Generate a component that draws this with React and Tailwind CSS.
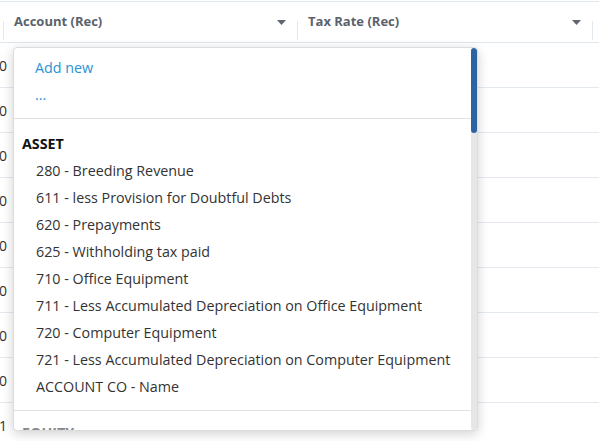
import React from 'react'

const items = [
  '280 - Breeding Revenue',
  '611 - less Provision for Doubtful Debts',
  '620 - Prepayments',
  '625 - Withholding tax paid',
  '710 - Office Equipment',
  '711 - Less Accumulated Depreciation on Office Equipment',
  '720 - Computer Equipment',
  '721 - Less Accumulated Depreciation on Computer Equipment',
  'ACCOUNT CO - Name',
]

const rows = ['0.00', '0.00', '0.00', '0.00', '0.00', '0.00', '0.00', '0.00', '0.01']

function Caret() {
  return (
    <svg width="9" height="5" viewBox="0 0 9 5" className="shrink-0">
      <path d="M0 0h9L4.5 5z" fill="#5f6670" />
    </svg>
  )
}

export default function App() {
  return (
    <div className="relative h-[441px] w-[599px] overflow-hidden bg-white" style={{ fontFamily: '"Open Sans", "Liberation Sans", sans-serif' }}>
      <div className="mt-px border-t border-[#dfe7ee]">
        <div className="flex h-[41px] items-stretch border-b border-[#dfe7ee] text-[13px] font-bold text-[#5b626c]">
          <div className="flex w-[4px] items-end pb-[2px]">
            <div className="ml-[3px] h-[19px] w-px bg-[#e3e8ed]" />
          </div>
          <div className="flex w-[293px] items-center pl-[10px] pr-[11px]">
            <span className="flex-1">Account (Rec)</span>
            <Caret />
          </div>
          <div className="flex items-end pb-[2px]">
            <div className="h-[19px] w-px bg-[#e3e8ed]" />
          </div>
          <div className="flex w-[294px] items-center pl-[10px] pr-[11px]">
            <span className="flex-1">Tax Rate (Rec)</span>
            <Caret />
          </div>
          <div className="flex items-end pb-[2px]">
            <div className="h-[19px] w-px bg-[#e3e8ed]" />
          </div>
        </div>
        {rows.map((v, i) => (
          <div key={i} className="flex h-[45px] items-center border-b border-[#e3e9ef] text-[14px] text-[#333]">
            <div className="flex w-[7px] justify-end overflow-hidden whitespace-nowrap">{v}</div>
          </div>
        ))}
      </div>

      <div className="absolute left-[13px] top-[47px] flex h-[384px] w-[465px] overflow-hidden rounded-[4px] border border-[#dcdcdc] bg-white shadow-[0_3px_12px_rgba(0,0,0,0.18)]">
        <div className="flex-1 overflow-hidden text-[14.3px] leading-[27px] text-[#333]">
          <div className="pt-[6px] pb-[10px] pl-[21px] text-[#2a93d5]">
            <div>Add new</div>
            <div>...</div>
          </div>
          <div className="border-t border-[#e2e2e2] pt-[11px] pb-[10px]">
            <div className="pl-[8px] font-bold text-[#111]">ASSET</div>
            {items.map((t) => (
              <div key={t} className="whitespace-nowrap pl-[22px]">{t}</div>
            ))}
          </div>
          <div className="border-t border-[#e2e2e2] pt-[8px]">
            <div className="pl-[8px] font-bold text-[#888]">EQUITY</div>
          </div>
        </div>
        <div className="w-[6px] shrink-0 rounded-[3px] bg-[#e6e6e6]">
          <div className="h-[85px] w-[6px] rounded-[3px] bg-[#2d62a3]" />
        </div>
      </div>
    </div>
  )
}
